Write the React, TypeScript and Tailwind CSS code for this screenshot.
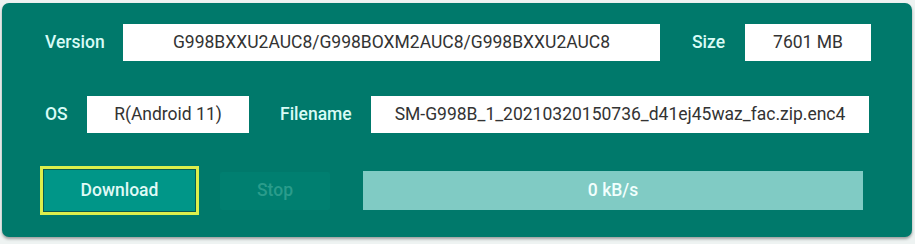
export default function App() {
    return (
        <div className="w-[915px] h-[244px] bg-[#eef3f2] pt-[3px] pl-[2px] font-['Roboto',sans-serif]">
            <div className="w-[910px] h-[234px] rounded-[7px] bg-[#00796b] shadow-[0_2px_3px_rgba(0,0,0,0.35)] pl-[43px] pt-[21px]">
                <div className="flex items-center h-[37px]">
                    <span className="w-[58px] whitespace-nowrap text-[17.5px] font-medium text-[#d8fbf6]">Version</span>
                    <div className="ml-[20px] w-[537px] h-[37px] bg-white flex items-center justify-center text-[17.5px] text-[#333]">
                        G998BXXU2AUC8/G998BOXM2AUC8/G998BXXU2AUC8
                    </div>
                    <span className="ml-[32px] w-[34px] whitespace-nowrap text-[17.5px] font-medium text-[#d8fbf6]">Size</span>
                    <div className="ml-[19px] w-[126px] h-[37px] bg-white flex items-center justify-center text-[17.5px] text-[#333]">
                        7601 MB
                    </div>
                </div>
                <div className="flex items-center h-[37px] mt-[35px]">
                    <span className="w-[21px] whitespace-nowrap text-[17.5px] font-medium text-[#d8fbf6]">OS</span>
                    <div className="ml-[21px] w-[162px] h-[37px] bg-white flex items-center justify-center text-[17.5px] text-[#333]">
                        R(Android 11)
                    </div>
                    <span className="ml-[31px] w-[72px] whitespace-nowrap text-[17.5px] font-medium text-[#d8fbf6]">Filename</span>
                    <div className="ml-[19px] w-[498px] h-[37px] bg-white flex items-center justify-center whitespace-nowrap text-[17.5px] text-[#333]">
                        SM-G998B_1_20210320150736_d41ej45waz_fac.zip.enc4
                    </div>
                </div>
                <div className="flex items-center mt-[33px] -ml-[5px]">
                    <div className="border-[3px] border-[#dcef4c] bg-[#0b5a4e] p-px">
                        <button type="button" className="w-[151px] h-[41px] bg-[#009688] text-[17.5px] font-medium text-[#e0faf6]">
                            Download
                        </button>
                    </div>
                    <button type="button" className="ml-[21px] w-[110px] h-[38px] bg-[#007f70] rounded-[2px] text-[17.5px] font-medium text-[#2a9c8b]">
                        Stop
                    </button>
                    <div className="ml-[33px] w-[500px] h-[39px] bg-[#80cbc4] flex items-center justify-center text-[17.5px] font-medium text-[#f2fffd]">
                        0 kB/s
                    </div>
                </div>
            </div>
        </div>
    );
}
